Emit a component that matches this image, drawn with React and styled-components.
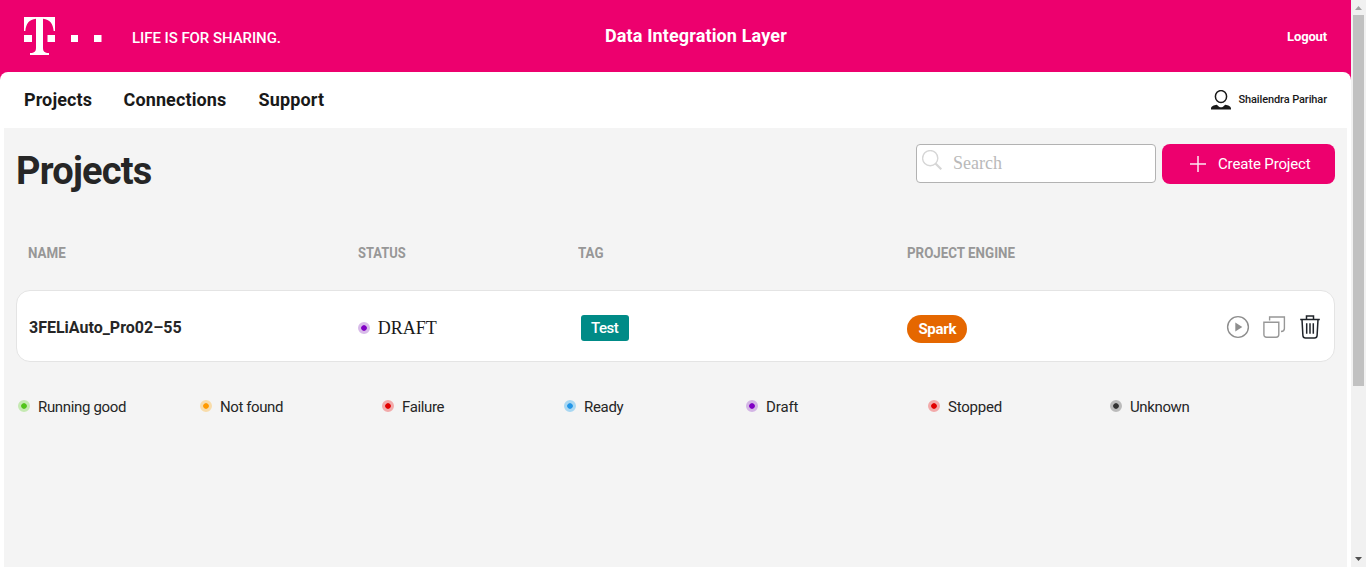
import React from 'react';
import styled, { createGlobalStyle } from 'styled-components';

const GlobalStyle = createGlobalStyle`
  * { box-sizing: border-box; }
  body { margin: 0; background: #fff; overflow: hidden; font-family: Roboto, "Liberation Sans", sans-serif; color: #262626; }
  svg { display: block; flex: none; }
`;

const Window = styled.div`
  display: flex;
  height: 567px;
`;

const Page = styled.div`
  flex: 1;
  min-width: 0;
  display: flex;
  flex-direction: column;
  background: #ed006e;
`;

const Brand = styled.header`
  height: 72px;
  flex: none;
  display: grid;
  grid-template-columns: 581px 1fr auto;
  align-items: center;
  padding: 0 24px;
  color: #fff;
`;

const BrandLeft = styled.div`
  display: flex;
  align-items: center;
  gap: 30px;
`;

const Label = styled.span`
  display: block;
  white-space: nowrap;
  font-size: ${(p) => p.$size}px;
  font-weight: ${(p) => p.$weight || 400};
  letter-spacing: ${(p) => p.$track || 0}px;
  line-height: 24px;
`;

const Slogan = styled(Label)`
  padding-top: 4px;
`;

const Logout = styled(Label)`
  justify-self: end;
  padding-top: 2px;
`;

const Panel = styled.div`
  flex: 1;
  min-height: 0;
  display: flex;
  flex-direction: column;
  padding: 0 4px;
  background: #fff;
  border-radius: 8px 8px 0 0;
`;

const Nav = styled.nav`
  height: 56px;
  flex: none;
  display: flex;
  align-items: center;
  justify-content: space-between;
  padding: 0 20px;
  color: #191919;
`;

const NavLinks = styled.div`
  display: flex;
`;

const NavLink = styled(Label)`
  width: ${(p) => p.$width}px;
`;

const User = styled.div`
  display: flex;
  align-items: center;
  gap: 7px;
`;

const Content = styled.main`
  flex: 1;
  padding: 16px 12px;
  background: #f4f4f4;
`;

const Toolbar = styled.div`
  display: flex;
  height: 56px;
  gap: 6px;
`;

const Heading = styled.h1`
  flex: 1;
  margin: 0;
  font-size: 38px;
  font-weight: 700;
  line-height: 55px;
  letter-spacing: -0.8px;
`;

const SearchBox = styled.div`
  width: 240px;
  height: 39px;
  display: flex;
  gap: 11px;
  padding: 5px;
  background: #fff;
  border: 1px solid #b2b2b2;
  border-radius: 4px;
  font: 18px/26px "Liberation Serif", serif;
  color: #b9b9b9;
`;

const CreateButton = styled.button`
  width: 173px;
  height: 40px;
  display: flex;
  align-items: center;
  gap: 12px;
  padding: 0 0 0 28px;
  border: 0;
  border-radius: 8px;
  background: #ed006e;
  color: #fff;
  font-family: inherit;
`;

const Columns = styled.div`
  display: grid;
  grid-template-columns: 329.75px 219.8px 329.75px 1fr;
  align-items: center;
`;

const TableHead = styled(Columns)`
  height: 90px;
  padding: 15px 0 0 12px;
  color: #979797;
`;

const HeadLabel = styled(Label)`
  transform: scaleX(${(p) => p.$condense || 0.89});
  transform-origin: left;
`;

const TableRow = styled(Columns)`
  height: 72px;
  padding: 2px 13px 0 11px;
  background: #fff;
  border: 1px solid #e4e4e4;
  border-radius: 14px;
`;

const ProjectName = styled(Label)`
  padding: 2px 0 0 1px;
`;

const Status = styled.div`
  display: flex;
  align-items: center;
  gap: 8px;
  padding-top: 2px;
  font: 18px/24px "Liberation Serif", serif;
  color: #191919;
`;

const Dot = styled.i`
  width: 12px;
  height: 12px;
  flex: none;
  border: 3px solid ${(p) => p.$ring};
  border-radius: 50%;
  background: ${(p) => p.$color};
  background-clip: padding-box;
`;

const Tag = styled.div`
  width: 48px;
  height: 26px;
  margin: 2px 0 0 3px;
  padding-top: 1px;
  border-radius: 3px;
  background: #008b87;
  color: #fff;
  text-align: center;
`;

const EngineCell = styled.div`
  display: flex;
  align-items: center;
  justify-content: space-between;
`;

const Engine = styled.div`
  width: 60px;
  height: 28px;
  margin-top: 4px;
  padding-top: 2px;
  border-radius: 14px;
  background: #e56700;
  color: #fff;
  text-align: center;
`;

const Actions = styled.div`
  display: flex;
  align-items: center;
  gap: 12px;
  margin-right: -1px;
`;

const Legend = styled.div`
  display: flex;
  padding: 33px 0 0 2px;
`;

const LegendItem = styled.div`
  width: 182px;
  display: flex;
  align-items: flex-start;
  gap: 8px;
  ${Dot} { margin-top: 5px; }
`;

const ScrollBar = styled.div`
  width: 15px;
  display: flex;
  flex-direction: column;
  align-items: center;
  background: #f1f1f1;
`;

const Thumb = styled.div`
  width: 11px;
  height: 371px;
  margin-bottom: auto;
  background: #c1c1c1;
`;

const Logo = () => (
  <svg width="78" height="38" viewBox="0 0 78 38" fill="#fff">
    <path d="M0 0H31V14H29.7C28.8 6.5 26 2.5 19 1.8V30.5C19 34.7 20.5 36 25 36V38H6V36C10.5 36 12 34.7 12 30.5V1.8C5 2.5 2.2 6.5 1.3 14H0Z" />
    <path d="M0 18H8V25H0ZM23.5 18H31V25H23.5ZM47 18H54V25H47ZM70 18H77.5V25H70Z" />
  </svg>
);

const UserIcon = () => (
  <svg width="20" height="20" viewBox="0 0 20 20">
    <ellipse cx="10" cy="6.6" rx="5.6" ry="6" fill="none" stroke="#191919" strokeWidth="1.5" />
    <path d="M0 19.6V18.5C0 16.3 2.8 15 5.8 14.7L8 16.7Q10 18 12 16.7L14.2 14.7C17.2 15 20 16.3 20 18.5V19.6Z" fill="#191919" />
  </svg>
);

const SearchIcon = () => (
  <svg width="20" height="20" viewBox="0 0 20 20" fill="none" stroke="#d6d6d6">
    <circle cx="8.2" cy="8.2" r="7.6" strokeWidth="1.4" />
    <path d="M13.5 13.5L19.3 19.3" strokeWidth="2.2" />
  </svg>
);

const PlusIcon = () => (
  <svg width="16" height="16" viewBox="0 0 16 16" fill="none" stroke="#fff" strokeOpacity=".9" strokeWidth="1.5">
    <path d="M8 0V16M0 8H16" />
  </svg>
);

const PlayIcon = () => (
  <svg width="24" height="24" viewBox="0 0 24 24">
    <circle cx="12" cy="12" r="10.4" fill="none" stroke="#8e8e8e" strokeWidth="1.4" />
    <path d="M9.3 7.6V16.4L16.3 12Z" fill="#8e8e8e" />
  </svg>
);

const CopyIcon = () => (
  <svg width="24" height="24" viewBox="0 0 24 24" fill="none" stroke="#979797" strokeWidth="1.4">
    <path d="M1.9 7.2H16.8V19.5Q16.8 22.2 14.1 22.2H4.6Q1.9 22.2 1.9 19.5Z" />
    <path d="M7.6 5.5V2H22.4V13.5Q22.4 16.3 19 16.5" />
  </svg>
);

const TrashIcon = () => (
  <svg width="24" height="24" viewBox="0 0 24 24" fill="none" stroke="#20242a" strokeWidth="1.5">
    <path d="M2.2 4.4H21.8M8.5 4V1.1H15.5V4M4 4.6L4.9 20.5Q5.1 23 7.5 23H16.5Q18.9 23 19.1 20.5L20 4.6" />
    <path d="M8.7 8.3V18.8M12 8.3V18.8M15.3 8.3V18.8" />
  </svg>
);

const Arrow = ({ up }) => (
  <svg width="15" height="15" viewBox="0 0 15 15">
    <path d={up ? 'M4 10H11L7.5 6Z' : 'M4 5H11L7.5 9Z'} fill={up ? '#a3a3a3' : '#505050'} />
  </svg>
);

const statuses = [
  ['Running good', '#52c41a', '#c5e9b2', -0.33],
  ['Not found', '#ff9a00', '#f8dcaa', -0.4],
  ['Failure', '#e20000', '#f2aaaa', -0.35],
  ['Ready', '#2196e8', '#a8d7f2', -0.3],
  ['Draft', '#8000c4', '#d3b5e5', -0.1],
  ['Stopped', '#e20000', '#f2aaaa', -0.2],
  ['Unknown', '#333333', '#bbbbbb', -0.38],
];

export default function App() {
  return (
    <Window>
      <GlobalStyle />
      <Page>
        <Brand>
          <BrandLeft>
            <Logo />
            <Slogan $size={15} $weight={500} $track={-0.06}>LIFE IS FOR SHARING.</Slogan>
          </BrandLeft>
          <Label $size={18} $weight={700} $track={0.13}>Data Integration Layer</Label>
          <Logout $size={13} $weight={700} $track={-0.15}>Logout</Logout>
        </Brand>
        <Panel>
          <Nav>
            <NavLinks>
              <NavLink $size={18} $weight={700} $track={0.1} $width={99.5}>Projects</NavLink>
              <NavLink $size={18} $weight={700} $track={0.12} $width={135}>Connections</NavLink>
              <NavLink $size={18} $weight={700} $track={0.15} $width={70}>Support</NavLink>
            </NavLinks>
            <User>
              <UserIcon />
              <Label $size={11} $weight={500} $track={-0.1}>Shailendra Parihar</Label>
            </User>
          </Nav>
          <Content>
            <Toolbar>
              <Heading>Projects</Heading>
              <SearchBox><SearchIcon />Search</SearchBox>
              <CreateButton><PlusIcon /><Label $size={15} $track={-0.15}>Create Project</Label></CreateButton>
            </Toolbar>
            <TableHead>
              <HeadLabel $size={15} $weight={700}>NAME</HeadLabel>
              <HeadLabel $size={15} $weight={700} $condense={0.86}>STATUS</HeadLabel>
              <HeadLabel $size={15} $weight={700}>TAG</HeadLabel>
              <HeadLabel $size={15} $weight={700}>PROJECT ENGINE</HeadLabel>
            </TableHead>
            <TableRow>
              <ProjectName $size={16} $weight={700}>3FELiAuto_Pro02–55</ProjectName>
              <Status><Dot $color="#8000c4" $ring="#d8bbe9" />DRAFT</Status>
              <Tag><Label $size={15} $weight={500} $track={-0.5}>Test</Label></Tag>
              <EngineCell>
                <Engine><Label $size={15} $weight={700} $track={-0.3}>Spark</Label></Engine>
                <Actions><PlayIcon /><CopyIcon /><TrashIcon /></Actions>
              </EngineCell>
            </TableRow>
            <Legend>
              {statuses.map(([name, color, ring, track]) => (
                <LegendItem key={name}><Dot $color={color} $ring={ring} /><Label $size={15} $track={track}>{name}</Label></LegendItem>
              ))}
            </Legend>
          </Content>
        </Panel>
      </Page>
      <ScrollBar><Arrow up /><Thumb /><Arrow /></ScrollBar>
    </Window>
  );
}
